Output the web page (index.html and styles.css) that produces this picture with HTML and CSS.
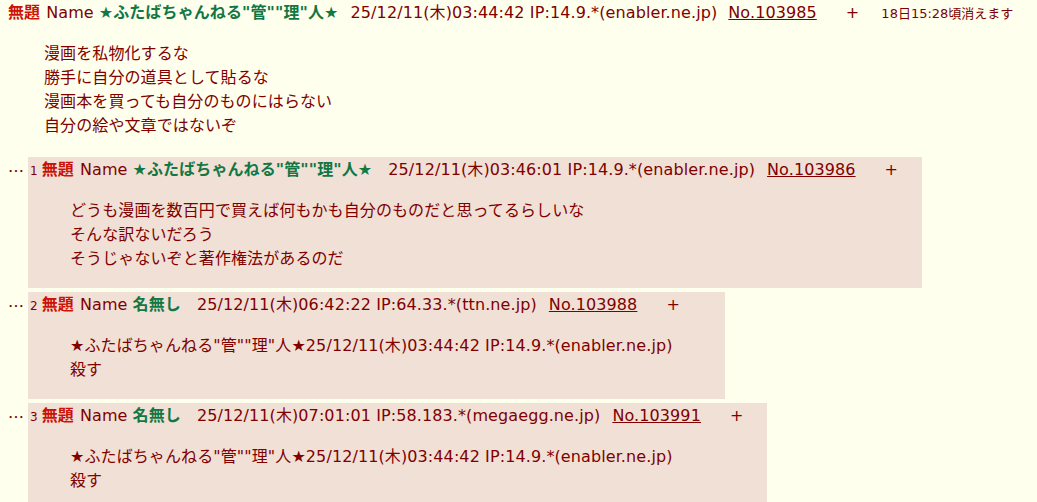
FILE: index.html
```html
<!DOCTYPE html>
<html lang="ja">
<head>
<meta charset="utf-8">
<title>ふたばちゃんねる</title>
<link rel="stylesheet" href="styles.css">
</head>
<body>
<div class="thread">
  <div class="op">
    <div class="hd"><span class="sub">無題</span><span class="lbl">Name</span><span class="nm">★ふたばちゃんねる"管""理"人★</span><span class="dt dt-op">25/12/11(木)03:44:42 IP:14.9.*(enabler.ne.jp)</span><a class="no no-op" href="#">No.103985</a><span class="del">+</span><span class="exp">18日15:28頃消えます</span></div>
    <blockquote class="body op-body">漫画を私物化するな<br>勝手に自分の道具として貼るな<br>漫画本を買っても自分のものにはらない<br>自分の絵や文章ではないぞ</blockquote>
  </div>

  <div class="replies">
    <div class="row">
      <div class="rts">…</div>
      <div class="rtd">
        <div class="hd"><span class="rsc">1</span><span class="sub">無題</span><span class="lbl">Name</span><span class="nm">★ふたばちゃんねる"管""理"人★</span><span class="dt">25/12/11(木)03:46:01 IP:14.9.*(enabler.ne.jp)</span><a class="no" href="#">No.103986</a><span class="del">+</span></div>
        <blockquote class="body">どうも漫画を数百円で買えば何もかも自分のものだと思ってるらしいな<br>そんな訳ないだろう<br>そうじゃないぞと著作権法があるのだ</blockquote>
      </div>
    </div>

    <div class="row">
      <div class="rts">…</div>
      <div class="rtd">
        <div class="hd"><span class="rsc">2</span><span class="sub">無題</span><span class="lbl">Name</span><span class="nm">名無し</span><span class="dt">25/12/11(木)06:42:22 IP:64.33.*(ttn.ne.jp)</span><a class="no" href="#">No.103988</a><span class="del">+</span></div>
        <blockquote class="body">★ふたばちゃんねる"管""理"人★25/12/11(木)03:44:42 IP:14.9.*(enabler.ne.jp)<br>殺す</blockquote>
      </div>
    </div>

    <div class="row">
      <div class="rts">…</div>
      <div class="rtd">
        <div class="hd"><span class="rsc">3</span><span class="sub">無題</span><span class="lbl">Name</span><span class="nm">名無し</span><span class="dt">25/12/11(木)07:01:01 IP:58.183.*(megaegg.ne.jp)</span><a class="no" href="#">No.103991</a><span class="del">+</span></div>
        <blockquote class="body">★ふたばちゃんねる"管""理"人★25/12/11(木)03:44:42 IP:14.9.*(enabler.ne.jp)<br>殺す</blockquote>
      </div>
    </div>
  </div>
</div>
</body>
</html>
```

FILE: styles.css
```css
html, body {
  margin: 0;
  background: #ffffee;
}

body {
  padding: 1px 8px 0 8px;
  color: #800000;
  font-family: "DejaVu Sans", "Noto Sans CJK JP", sans-serif;
  font-size: 16px;
  line-height: 24px;
  letter-spacing: 0.1px;
}

.hd {
  white-space: nowrap;
  line-height: 24px;
}

.sub {
  color: #cc1105;
  font-weight: bold;
}

.lbl {
  margin-left: 6px;
}

.nm {
  color: #117743;
  font-weight: bold;
  margin-left: 5px;
}

.dt {
  margin-left: 16px;
}

.dt-op {
  margin-left: 12px;
}

.no {
  color: #800000;
  text-decoration: underline;
  margin-left: 12px;
}

.no-op {
  margin-left: 11px;
}

.del {
  margin-left: 29px;
  margin-right: 22px;
}

.exp {
  font-size: 13px;
  letter-spacing: 0;
  margin-left: 0;
}

.body {
  margin: 16px 50px 16px 40px;
  white-space: nowrap;
}

.op-body {
  margin-left: 36px;
}

.replies {
  margin-top: 19px;
  display: flex;
  flex-direction: column;
  gap: 4px;
}

.row {
  display: flex;
  align-items: flex-start;
}

.rts {
  width: 20px;
  padding-top: 1px;
  line-height: 24px;
  font-family: "Noto Sans CJK JP", sans-serif;
  flex: none;
}

.rtd {
  background: #f0e0d6;
  padding: 1px 2px;
}

.rsc {
  font-size: 12px;
  margin-right: 4px;
}
```
